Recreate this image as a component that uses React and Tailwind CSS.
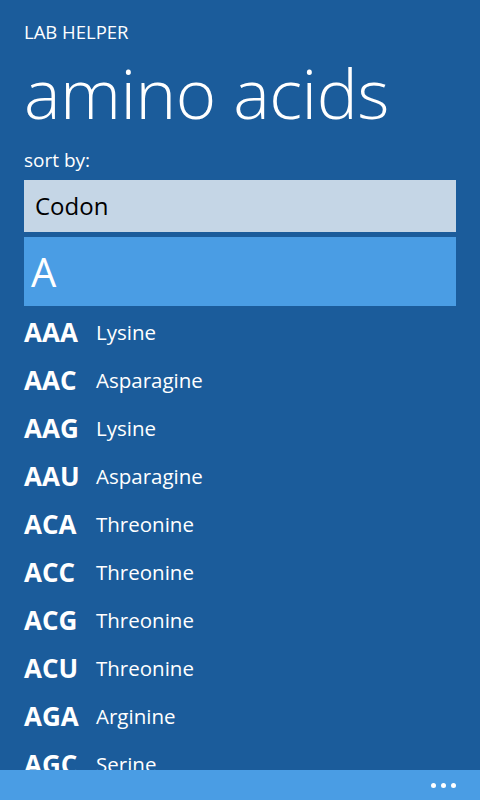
const rows = [
  ["AAA", "Lysine"],
  ["AAC", "Asparagine"],
  ["AAG", "Lysine"],
  ["AAU", "Asparagine"],
  ["ACA", "Threonine"],
  ["ACC", "Threonine"],
  ["ACG", "Threonine"],
  ["ACU", "Threonine"],
  ["AGA", "Arginine"],
  ["AGC", "Serine"],
  ["AGG", "Arginine"],
];

export default function App() {
  return (
    <div
      className="w-[480px] h-[800px] bg-[#1b5c9b] text-white flex flex-col overflow-hidden"
      style={{ fontFamily: '"Open Sans", "Noto Sans", sans-serif' }}
    >
      <div className="px-6 pt-[20px]">
        <div className="text-[18.5px] leading-[24px]">LAB HELPER</div>
        <div className="text-[69px] font-light leading-[80px] tracking-[-0.5px] mt-[8px]">amino acids</div>
        <div className="text-[19px] leading-[24px] mt-[16px]">sort by:</div>
        <div className="mt-[8px] h-[52px] bg-[#c5d6e6] text-black text-[24px] flex items-center px-[11px]">Codon</div>
        <div className="mt-[5px] h-[69px] bg-[#4a9de4] text-[40px] font-normal flex items-center px-[7px]">A</div>
      </div>
      <div className="flex-1 overflow-hidden px-6 pt-[2px]">
        {rows.map(([c, n]) => (
          <div key={c} className="h-12 flex items-center">
            <span className="w-[72px] text-[26px] font-bold">{c}</span>
            <span className="text-[20.5px]">{n}</span>
          </div>
        ))}
      </div>
      <div className="h-[30px] bg-[#4a9de4] flex items-center justify-end pr-[24px] gap-[5px] shrink-0">
        <span className="w-[5px] h-[5px] rounded-full bg-white"></span>
        <span className="w-[5px] h-[5px] rounded-full bg-white"></span>
        <span className="w-[5px] h-[5px] rounded-full bg-white"></span>
      </div>
    </div>
  );
}
